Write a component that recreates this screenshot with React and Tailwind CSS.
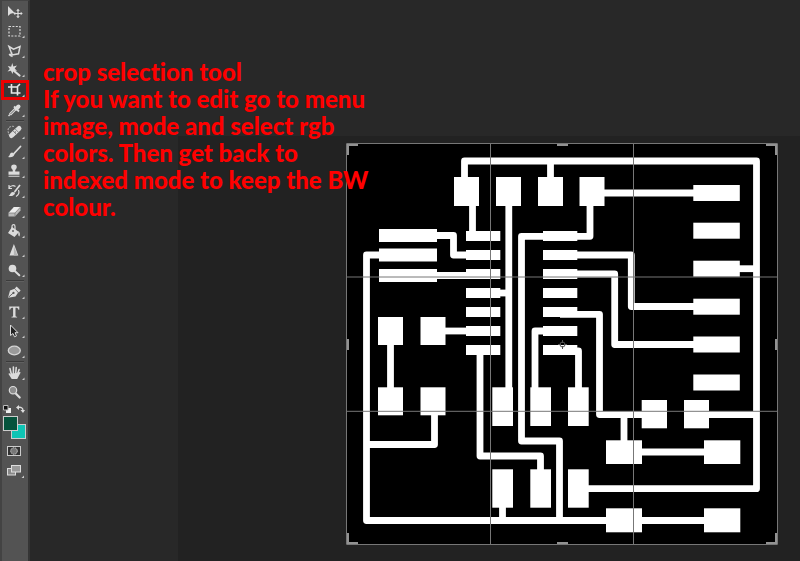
const LIGHT = "#dcdcdc";

const icons = {
  Move: (
    <>
      <path d="M8 5v10l2.500-2.300 4-.9z" fill={LIGHT} />
      <path d="M18 9v7M14.500 12.500h7" stroke={LIGHT} strokeWidth="1.200" />
      <path d="M18 7.800l1.800 2h-3.600zM18 17.200l1.800-2h-3.600zM13.300 12.500l2-1.800v3.600zM22.700 12.500l-2-1.800v3.600z" fill={LIGHT} />
    </>
  ),
  Marquee: <rect x="9" y="5.500" width="11" height="9.500" fill="none" stroke={LIGHT} strokeWidth="1.200" strokeDasharray="2 1.400" />,
  Lasso: (
    <>
      <path d="M9 5.500l4.500 2.700 6.500-2.700-1.500 7.300-6.300 1.200z" fill="none" stroke={LIGHT} strokeWidth="1.500" />
      <path d="M12 11.500l-2 3.700M9 13.200l3.500 2.500" stroke={LIGHT} strokeWidth="1.500" fill="none" />
    </>
  ),
  Wand: (
    <>
      <path d="M13 10l6.500 5.500" stroke={LIGHT} strokeWidth="2.200" strokeLinecap="round" />
      <path d="M12.300 3l1 3.500 3.700-1-2.300 3 2.300 2.400-3.500-.4-1 3.500-1.600-3.200-3.400.7 2.300-2.600-2-2.900 3.300.8z" fill={LIGHT} />
    </>
  ),
  Crop: <path d="M11.500 4v9h9M8 7h9.500v8.500M17 7l3-3" fill="none" stroke="#e8e8e8" strokeWidth="1.600" />,
  Eyedropper: (
    <>
      <path d="M10 14.500l6-6" stroke={LIGHT} strokeWidth="2.800" />
      <path d="M10.400 14.100l4.800-4.800" stroke="#666" strokeWidth="1" />
      <path d="M14 6.500l5 5" stroke={LIGHT} strokeWidth="1.800" />
      <path d="M16.500 8.500l2-2" stroke={LIGHT} strokeWidth="4" strokeLinecap="round" />
      <path d="M8.500 16l1.500-1.500" stroke={LIGHT} strokeWidth="1.400" />
    </>
  ),
  Healing: (
    <>
      <path d="M14 4.500c-3-1-6 1-6 4 0 2 1 3 1 4.500" fill="none" stroke="#aaa" strokeWidth="1.200" strokeDasharray="2 1" />
      <path d="M11.500 13.500l7.500-7" stroke={LIGHT} strokeWidth="5" strokeLinecap="round" />
      <path d="M13 9l4 4M15.200 7l4 4" stroke="#777" strokeWidth=".8" />
      <circle cx="15.300" cy="10" r=".8" fill="#777" />
    </>
  ),
  Brush: (
    <>
      <path d="M20.500 4.500l-6.500 7" stroke={LIGHT} strokeWidth="1.800" strokeLinecap="round" />
      <path d="M14.500 12c-.4 3-3.500 3.800-6.500 3 2-1 1.500-4.500 4.200-4.500z" fill={LIGHT} />
    </>
  ),
  Stamp: <path d="M14 3.500c3.200 0 3.300 3 2 4.500-.9 1-.9 1.700-.7 2.500h4.200v3.300h-11v-3.300h4.200c.2-.8.200-1.500-.7-2.500-1.300-1.500-1.200-4.500 2-4.500zM8.500 14.800h11v1h-11z" fill={LIGHT} />,
  History: (
    <>
      <path d="M20 4l-5.500 7" stroke={LIGHT} strokeWidth="1.700" />
      <path d="M15 11.500c0 3-3.500 4-6.500 3.500 2-1 1.800-4 4.300-4z" fill={LIGHT} />
      <path d="M9 7c2-3 5-2.500 6.500-1.500M9 4v3.500h3M18.500 9c1 2.500 0 5-2.500 6.500" fill="none" stroke={LIGHT} strokeWidth="1.200" />
    </>
  ),
  Eraser: (
    <>
      <path d="M8.500 12l5.500-6h6.500v3.500l-5.500 6H8.500z" fill="#bbb" />
      <path d="M8.500 12l5.500-6h6.500L15 12z" fill="#eee" />
      <path d="M8.500 12H15v3.500M15 12l5.500-6" fill="none" stroke="#777" strokeWidth=".7" />
    </>
  ),
  Bucket: (
    <>
      <path d="M12 6l7 5-4.500 5-6.500-4z" fill={LIGHT} />
      <path d="M12 10V5.500c0-2.500 3-2.500 3 0V9" fill="none" stroke={LIGHT} strokeWidth="1.200" />
      <circle cx="13" cy="10" r="1" fill="#666" />
      <path d="M18.500 10c1.500 1.500 2 4 .7 5.500-1.400-1-.9-3.500-.7-5.500z" fill={LIGHT} />
    </>
  ),
  Sharpen: (
    <>
      <path d="M13.900 4l4.400 11.500H9.500z" fill={LIGHT} />
      <path d="M13.900 6v9.500h3.600z" fill="#b5b5b5" />
    </>
  ),
  Dodge: (
    <>
      <circle cx="12.500" cy="8.500" r="3.800" fill={LIGHT} />
      <path d="M15 11.200l4.300 4" stroke={LIGHT} strokeWidth="2" strokeLinecap="round" />
    </>
  ),
  Pen: (
    <>
      <path d="M8 15.700l2-7.200 4.500-1.700 3.500 4-2.500 3.700z" fill={LIGHT} />
      <path d="M8.500 15.200l4.500-4" stroke="#555" strokeWidth=".9" />
      <circle cx="13.500" cy="10.900" r="1.100" fill="#555" />
      <path d="M15.700 5.500l4 4" stroke={LIGHT} strokeWidth="2.600" />
    </>
  ),
  Type: <path d="M9.300 4.500h10v3.200h-.9c-.3-1.600-.9-2-2.900-2v7.700c0 1 .3 1.200 1.600 1.300v.8h-5.600v-.8c1.300-.1 1.600-.3 1.600-1.300V5.700c-2 0-2.600.4-2.900 2h-.9z" fill={LIGHT} />,
  Select: <path d="M10.500 4v10.500l2.500-2 1.500 3.300 2-.9-1.500-3.200h3z" fill="#222" stroke={LIGHT} strokeWidth="1" />,
  Ellipse: <ellipse cx="14.300" cy="9.500" rx="6" ry="4.300" fill="#999" stroke="#d5d5d5" strokeWidth="1.300" />,
  Hand: (
    <>
      <path d="M11 10.500l5.500-.5 3.200-1c1.200.1 1 .9.400 1.500L17.200 16h-5.500L8.500 11c.2-1 1.200-1 2.500.5z" fill={LIGHT} />
      <path d="M11.300 11L10 5.600M13.400 10.500V4M15.700 10.500l.5-6M17.600 11l1.500-4.500" stroke={LIGHT} strokeWidth="1.600" strokeLinecap="round" />
    </>
  ),
  Zoom: (
    <>
      <path d="M15.500 11.200l4.200 4.300" stroke={LIGHT} strokeWidth="2.200" strokeLinecap="round" />
      <circle cx="13" cy="8.200" r="3.700" fill="#8d8d8d" stroke={LIGHT} strokeWidth="1.200" />
    </>
  ),
};

function Tool({ name }) {
  const active = name === "Crop";
  return (
    <button
      type="button"
      aria-label={name}
      aria-pressed={active}
      className={
        active
          ? "flex min-h-0 items-center bg-[#383838] ring-3 ring-[#ee0000] ring-inset"
          : "flex min-h-0 items-center"
      }
    >
      <svg viewBox="1 0 28 20" className="h-5 w-7 shrink-0" aria-hidden="true">
        {icons[name]}
        {name !== "Move" && name !== "Zoom" && <path d="M24.500 14.500v2.500H22z" fill="#ccc" />}
      </svg>
    </button>
  );
}

function Separator() {
  return <div className="mx-1 h-[2px] border-b border-[#606060] bg-[#3b3b3b]" />;
}

function Toolbar() {
  return (
    <nav aria-label="Tools" className="flex w-[30px] shrink-0 flex-col border-x-2 border-t border-t-[#444] border-r-[#353535] border-l-[#434343] bg-[#535353]">
      <div className="-mx-[1px] grid h-[119px] auto-rows-fr">
        {["Move", "Marquee", "Lasso", "Wand", "Crop", "Eyedropper"].map((n) => <Tool key={n} name={n} />)}
      </div>
      <Separator />
      <div className="-mx-[1px] grid h-[158px] auto-rows-fr">
        {["Healing", "Brush", "Stamp", "History", "Eraser", "Bucket", "Sharpen", "Dodge"].map((n) => <Tool key={n} name={n} />)}
      </div>
      <Separator />
      <div className="-mx-[1px] grid h-[79px] auto-rows-fr">
        {["Pen", "Type", "Select", "Ellipse"].map((n) => <Tool key={n} name={n} />)}
      </div>
      <Separator />
      <div className="-mx-[1px] grid h-[39px] auto-rows-fr">
        {["Hand", "Zoom"].map((n) => <Tool key={n} name={n} />)}
      </div>
      <div className="flex h-[14px] items-center justify-between pr-[3px] pl-[1px]">
        <button type="button" aria-label="Default colors">
          <svg viewBox="0 0 8 8" className="h-2 w-2">
            <path d="M3 3h5v5H3z" fill="#eee" />
            <path d="M.5.500h4.500v4.500H.5z" fill="#111" stroke="#bbb" />
          </svg>
        </button>
        <button type="button" aria-label="Swap colors">
          <svg viewBox="0 0 9 8" className="h-2 w-[9px]">
            <path d="M2 2.500c3-.8 5 .5 5 3" fill="none" stroke="#ddd" strokeWidth="1.300" />
            <path d="M0 2.500L3 0v5zM4.500 5h4.500L7 8z" fill="#ddd" />
          </svg>
        </button>
      </div>
      <div className="grid h-[23px] grid-cols-[8px_7px_8px] grid-rows-[8px_7px_8px] pl-[1px]">
        <button type="button" aria-label="Background color" className="col-span-2 col-start-2 row-span-2 row-start-2 border border-[#ccc] bg-[#0fc4b4]" />
        <button type="button" aria-label="Foreground color" className="col-span-2 col-start-1 row-span-2 row-start-1 border border-[#ccc] bg-[#06533c]" />
      </div>
      <div className="-mx-[1px] mt-[2px] flex flex-col">
        <button type="button" aria-label="Quick mask">
          <svg viewBox="0 0 28 20" className="h-5 w-7 shrink-0">
            <rect x="6.500" y="5.500" width="13" height="9" fill="#333" stroke="#ccc" />
            <circle cx="13" cy="10" r="3.300" fill="#777" stroke="#ccc" strokeDasharray="1.500 .8" />
          </svg>
        </button>
        <button type="button" aria-label="Screen mode">
          <svg viewBox="0 0 28 20" className="h-5 w-7 shrink-0">
            <rect x="6.500" y="7.500" width="8" height="6.500" fill="#888" stroke="#ddd" />
            <rect x="10.500" y="4.500" width="9" height="6.500" fill="#999" stroke="#ddd" />
            <path d="M23 14.500v2.500h-2.500z" fill="#ccc" />
          </svg>
        </button>
      </div>
    </nav>
  );
}

const icRows = [231, 250, 269, 288, 307, 326, 345];

/* x, y, width, height */
const pads = [
  [454, 177, 25, 29], [496, 177, 25, 29], [538, 177, 25, 29], [579.5, 177, 25, 29],
  [693.300, 185, 46.500, 16], [693.300, 222.700, 46.500, 16], [693.300, 260.700, 46.500, 16],
  [693.300, 298.700, 46.500, 16], [693.300, 336.500, 46.500, 16], [693.300, 374.500, 46.500, 16],
  [379, 229, 58, 13], [379, 248.500, 58, 13], [379, 269, 58, 13],
  [378, 317, 25, 28], [420.500, 317, 25, 28], [378, 387.300, 25, 28], [420.500, 387.300, 25, 28],
  [492.300, 387.300, 20.700, 38.700], [530.300, 387.300, 20.700, 38.700], [568, 387.300, 20.700, 38.700],
  [492.300, 469.300, 20.700, 38.400], [530.300, 469.300, 20.700, 38.400], [568, 469.300, 20.700, 38.400],
  [641.700, 400, 25.300, 28.300], [684, 400, 25, 28.300],
  [606, 440.300, 36, 23.700], [704, 440.300, 36.300, 23.700],
  [606, 508.300, 36, 24], [704, 508.300, 36.300, 24],
  ...icRows.map((y) => [466, y, 34.300, 10]),
  ...icRows.map((y) => [543, y, 34.300, 10]),
];

const traces = [
  "M464.500 180V161H756.500V488.700H588",
  "M550.500 161V180",
  "M472.500 204V234",
  "M508.800 204V390",
  "M590 204V236.300H575",
  "M602 193H695",
  "M738 268.700H756",
  "M435 235.500H453.500V255H468",
  "M381 255H366.500V520.500H706",
  "M435 275.500H468",
  "M545 236.300H521.500V441H559.500V520",
  "M575 255H631.300V306.500H695",
  "M575 274H614.700V344.500H695",
  "M560 314.300H599.500V414.500H644",
  "M707 414.500H756",
  "M545 331H535V390",
  "M562 351H578.500V390",
  "M498 293H508",
  "M480 352V456H540.500V471",
  "M444 331H468",
  "M390.500 343V389",
  "M434.500 414V444.500H366",
  "M502.500 506V520",
  "M624 414V442",
  "M640 452H706",
];

function CircuitBoard() {
  return (
    <svg viewBox="346 143 432 402" className="block h-[402px] w-[432px] bg-black" role="img" aria-label="Circuit board with crop frame">
      <g fill="none" stroke="#fff" strokeWidth="6.800" strokeLinejoin="round">
        {traces.map((d) => <path key={d} d={d} />)}
      </g>
      <g fill="#fff">
        {pads.map(([x, y, w, h]) => <rect key={`${x}-${y}`} x={x} y={y} width={w} height={h} />)}
      </g>
      <g fill="none" stroke="#777">
        <path d="M346.500 143.500H777.500V544.500H346.500zM490.500 144V544M633.500 144V544M347 277H777M347 411.300H777" />
      </g>
      <g fill="#929292">
        <path d="M347 144h11v2h-9v9h-2zM777 144h-11v2h9v9h2zM347 544h11v-2h-9v-9h-2zM777 544h-11v-2h9v-9h2z" />
        <path d="M557 144h11v2h-11zM557 542h11v2h-11zM347 339h2v11h-2zM775 339h2v11h-2z" />
      </g>
      <g fill="none" stroke="#555">
        <circle cx="562.500" cy="344.500" r="2.500" />
        <path d="M562.500 340v3M562.500 346v3M558 344.500h3M564 344.500h3" />
      </g>
    </svg>
  );
}

const note = [
  "crop selection tool",
  "If you want to edit go to menu",
  "image, mode and select rgb",
  "colors. Then get back to",
  "indexed mode to keep the BW",
  "colour.",
];

export default function App() {
  return (
    <div className="flex min-h-screen bg-[#282828]">
      <Toolbar />
      <main className="relative flex min-w-0 flex-1 flex-col overflow-hidden pt-[136px] pl-[148px]">
        <section className="flex flex-1 justify-end bg-[#222] pt-[7px] pr-[22px]">
          <CircuitBoard />
        </section>
        <p className="absolute top-[58px] left-[13px] font-['Lato','Liberation_Sans',sans-serif] text-[24px] leading-[27px] font-black whitespace-nowrap text-[#ff0000] [font-variant-ligatures:none]">
          {note.map((line) => <span key={line} className="block">{line}</span>)}
        </p>
      </main>
    </div>
  );
}
